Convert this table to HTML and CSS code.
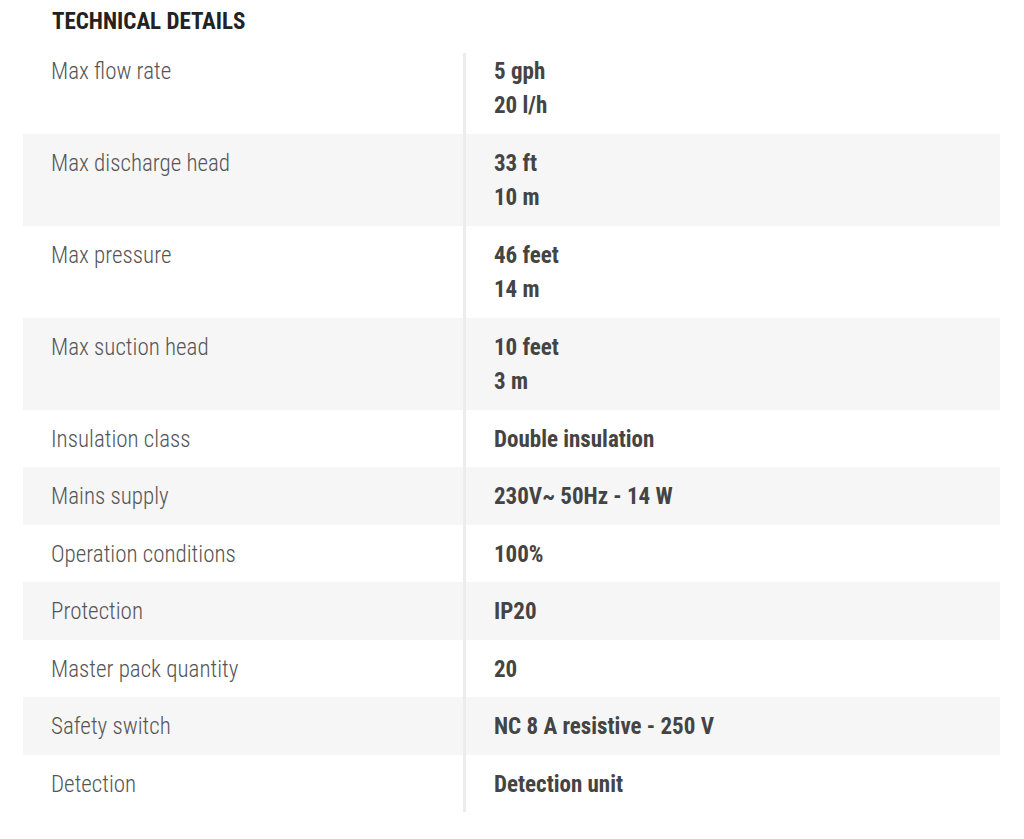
FILE: index.html
```html
<!DOCTYPE html>
<html lang="en">
<head>
<meta charset="utf-8">
<title>Technical details</title>
<link rel="stylesheet" href="styles.css">
</head>
<body>
<section class="specs">
  <h2 class="specs-title">TECHNICAL DETAILS</h2>
  <div class="specs-table">
    <div class="row first">
      <div class="label">Max flow rate</div>
      <div class="value"><div>5 gph</div><div>20 l/h</div></div>
    </div>
    <div class="row alt">
      <div class="label">Max discharge head</div>
      <div class="value"><div>33 ft</div><div>10 m</div></div>
    </div>
    <div class="row">
      <div class="label">Max pressure</div>
      <div class="value"><div>46 feet</div><div>14 m</div></div>
    </div>
    <div class="row alt">
      <div class="label">Max suction head</div>
      <div class="value"><div>10 feet</div><div>3 m</div></div>
    </div>
    <div class="row">
      <div class="label">Insulation class</div>
      <div class="value"><div>Double insulation</div></div>
    </div>
    <div class="row alt">
      <div class="label">Mains supply</div>
      <div class="value"><div>230V~ 50Hz - 14 W</div></div>
    </div>
    <div class="row">
      <div class="label">Operation conditions</div>
      <div class="value"><div>100%</div></div>
    </div>
    <div class="row alt">
      <div class="label">Protection</div>
      <div class="value"><div>IP20</div></div>
    </div>
    <div class="row">
      <div class="label">Master pack quantity</div>
      <div class="value"><div>20</div></div>
    </div>
    <div class="row alt">
      <div class="label">Safety switch</div>
      <div class="value"><div>NC 8 A resistive - 250 V</div></div>
    </div>
    <div class="row">
      <div class="label">Detection</div>
      <div class="value"><div>Detection unit</div></div>
    </div>
  </div>
</section>
</body>
</html>
```
FILE: styles.css
```css
html, body {
  margin: 0;
  padding: 0;
  background: #ffffff;
}

body {
  font-family: "Roboto", "Liberation Sans", sans-serif;
  font-stretch: 87.5%;
}

.specs {
  width: 977px;
  margin-left: 23px;
}

.specs-title {
  margin: 7px 0 16px 29px;
  font-size: 23px;
  line-height: 30px;
  font-weight: 700;
  color: #222222;
}

.specs-table {
  display: flex;
  flex-direction: column;
}

.row {
  display: grid;
  grid-template-columns: 440px 1fr;
  font-size: 23px;
  line-height: 34.5px;
}

.row.alt {
  background: #f6f6f6;
}

.label {
  padding: 13px 0 10px 28px;
  font-weight: 300;
  color: #555555;
}

.value {
  padding: 13px 0 10px 28px;
  border-left: 3px solid #ececec;
  font-weight: 700;
  color: #444444;
}

.row.first .label,
.row.first .value {
  padding-top: 1.5px;
}
```
